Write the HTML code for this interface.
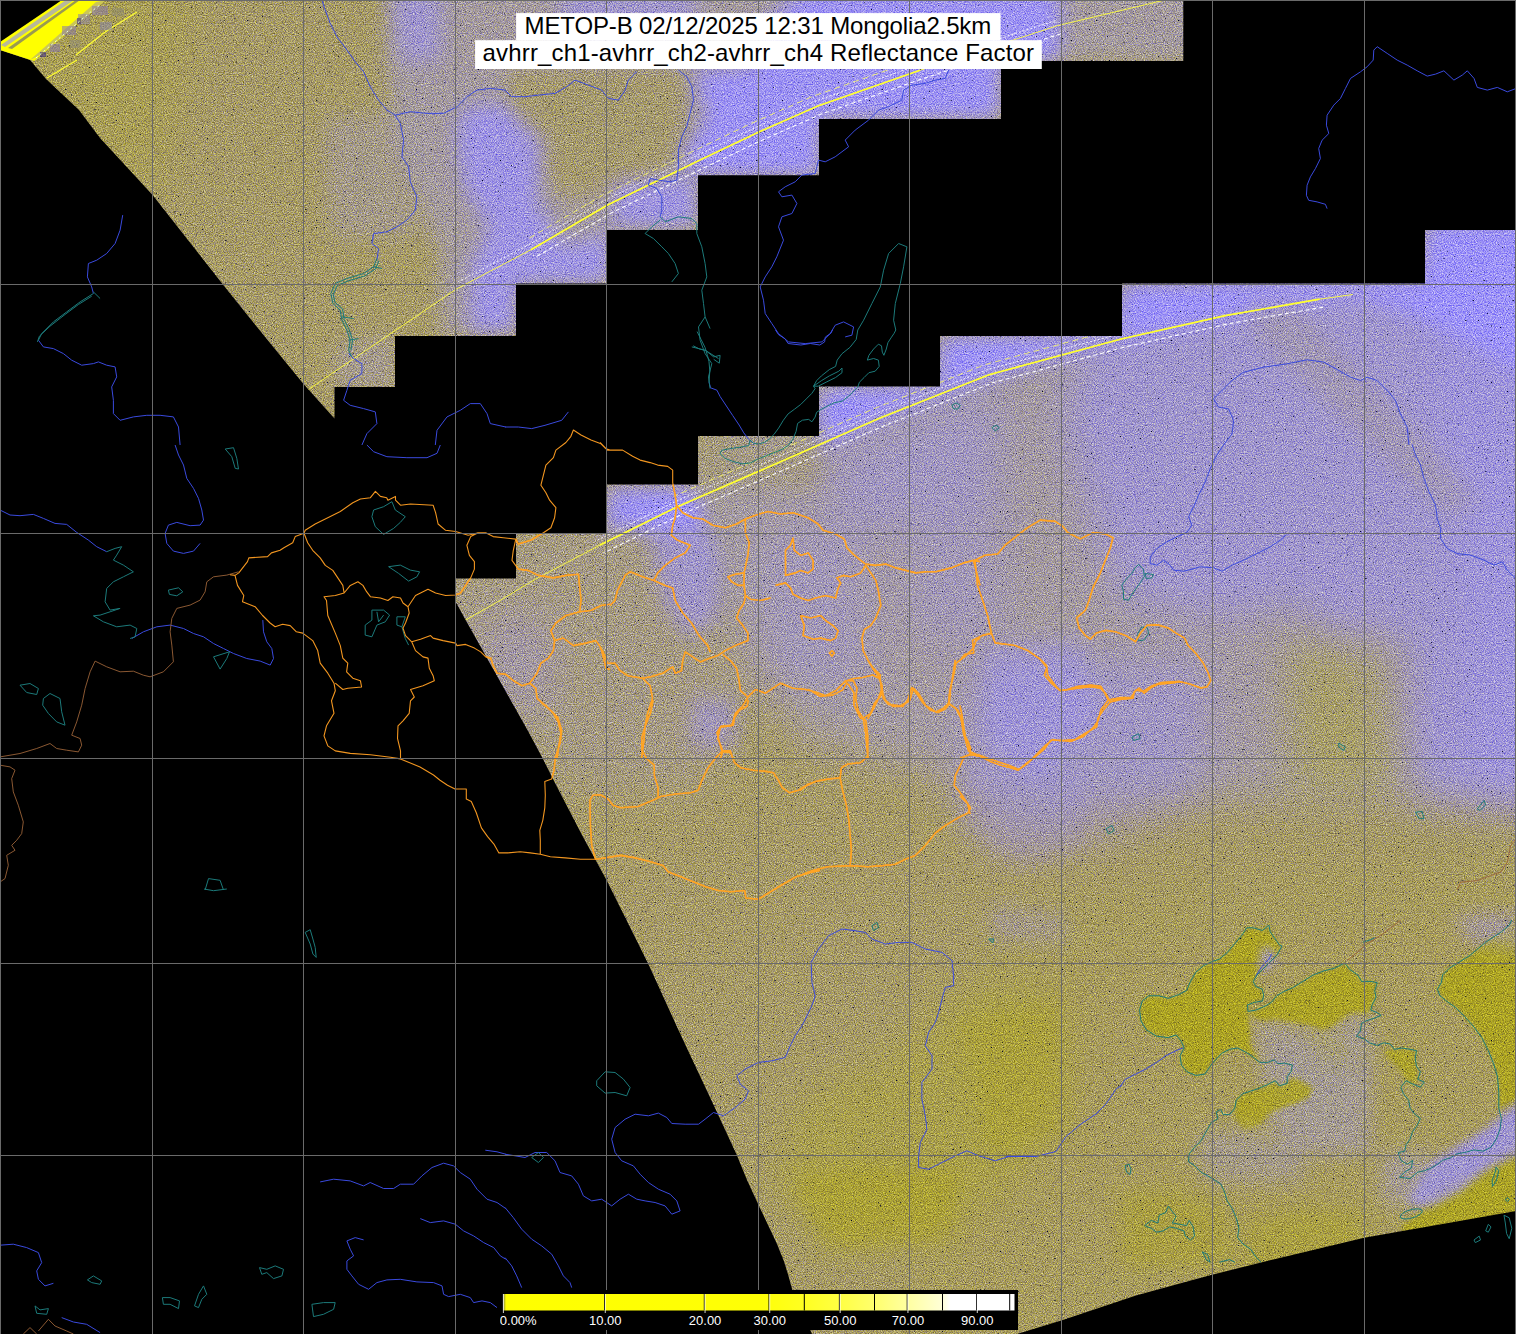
<!DOCTYPE html>
<html><head><meta charset="utf-8"><title>METOP-B AVHRR Mongolia</title>
<style>
html,body{margin:0;padding:0;background:#000;}
body{width:1516px;height:1334px;overflow:hidden;position:relative;font-family:"Liberation Sans",sans-serif;}
svg{position:absolute;left:0;top:0;display:block}
.cb{position:absolute;left:500px;top:1290px;width:518px;height:40px;background:#000}
</style></head><body>
<svg width="1516" height="1334" viewBox="0 0 1516 1334">
<defs>
<clipPath id="sw"><polygon points="62,0 1183.3,0 1183.3,61 1001,61 1001,119 819,119 819,175.2 698,175.2 698,230 607,230 607,283.5 516,283.5 516,336 395,336 395,387 334.5,387 334.5,418.5 303.5,384 268.6,341.3 222.5,284 152.8,195.2 100,138 79,110 46,79 30,60 0,50"/><polygon points="1516,230 1425,230 1425,283.5 1122,283.5 1122,336 940,336 940,386.5 819,386.5 819,436 698,436 698,484.5 606,484.5 606,533 516,533 516,578.5 455.8,578.5 455.8,602 464.5,618 487.5,659 501,683 528,731 543,759 555,783 582,835 606.5,880 648,963.2 679,1031.2 717,1112.2 737,1155.4 747,1180 758.5,1205 767.7,1224.3 776.9,1243.7 783.9,1261.3 788,1274.2 792.2,1289.4 812,1334 1017,1334 1061.3,1320.4 1136,1295.5 1211,1275 1272.3,1259.8 1364.2,1237.7 1442.5,1224 1516,1211"/></clipPath>
<filter id="b30" x="-30%" y="-30%" width="160%" height="160%"><feGaussianBlur stdDeviation="22"/></filter>
<filter id="b12" x="-30%" y="-30%" width="160%" height="160%"><feGaussianBlur stdDeviation="10"/></filter>
<filter id="b3" x="-10%" y="-10%" width="120%" height="120%"><feGaussianBlur stdDeviation="2"/></filter>
<filter id="b5" x="-30%" y="-30%" width="160%" height="160%"><feGaussianBlur stdDeviation="4"/></filter>
<filter id="nz" x="0" y="0" width="100%" height="100%" color-interpolation-filters="sRGB">
<feTurbulence type="fractalNoise" baseFrequency="0.9" numOctaves="2" seed="7" result="n"/>
<feColorMatrix type="matrix" values="1.2 0 0 0 -0.1  1.15 0 0 0 -0.075  0.5 0 1.1 0 -0.3  0 0 0 0 1"/>
</filter>
<filter id="dots" x="0" y="0" width="100%" height="100%" color-interpolation-filters="sRGB">
<feTurbulence type="fractalNoise" baseFrequency="0.55" numOctaves="1" seed="3"/>
<feColorMatrix type="matrix" values="0 0 0 0 0  0 0 0 0 0.02  0 0 0 0 0.15  9 0 0 0 -6.35"/>
</filter>
</defs>
<rect width="1516" height="1334" fill="#000"/>
<g clip-path="url(#sw)">
<rect width="1516" height="1334" fill="#a69a68"/>

<polygon points="-40,-40 200,-40 160,200 -40,60" fill="#aaa144" opacity="0.5" filter="url(#b30)"/>
<polygon points="389,-20 1200,-20 1200,61 1001,61 1001,119 819,119 819,176 698,176 698,230 607,230 607,284 517,284 517,336 440,336 440,250 400,160 385,60" fill="#a39bc4" opacity="0.6" filter="url(#b12)"/>
<polygon points="323,119 399,110 420,237 330,237" fill="#a39bc4" opacity="0.35" filter="url(#b12)"/>
<polygon points="335,345 395,335 395,390 335,390" fill="#a39bc4" opacity="0.4" filter="url(#b12)"/>
<polygon points="508,71 612,66 688,71 684,157 641,190 565,199 527,157 508,119" fill="#a69a68" opacity="0.85" filter="url(#b12)"/>
<polygon points="460,109 503,102 546,142 536,199 565,247 612,228 612,285 517,285 517,332 470,332 470,266 489,228 465,190 456,142" fill="#9d93fa" opacity="0.75" filter="url(#b12)"/>
<polygon points="693,71 755,66 760,28 802,-10 1060,-10 1060,61 1000,61 1000,119 821,119 821,176 698,176 679,157 707,119" fill="#9d93fa" opacity="0.92" filter="url(#b12)"/>
<polygon points="612,180 698,176 698,228 612,228" fill="#9d93fa" opacity="0.7" filter="url(#b12)"/>
<polygon points="389,-10 441,-10 441,62 400,62" fill="#9d93fa" opacity="0.5" filter="url(#b12)"/>
<polygon points="560,-10 700,-10 690,30 600,60 560,50" fill="#9d93fa" opacity="0.5" filter="url(#b12)"/>
<polygon points="700,436 819,387 940,336 1122,284 1425,230 1560,200 1560,800 1300,800 1100,800 950,780 800,740 740,640 700,560" fill="#a39bc4" opacity="0.62" filter="url(#b30)"/>
<polygon points="430,578 516,533 606,485 700,470 760,700 700,790 560,790 430,640" fill="#a39bc4" opacity="0.3" filter="url(#b30)"/>
<polygon points="606,487 698,487 698,531 606,531" fill="#9d93fa" opacity="0.92" filter="url(#b12)"/>
<polygon points="640,500 700,500 720,560 717,616 690,640 662,600 650,540" fill="#9d93fa" opacity="0.55" filter="url(#b12)"/>
<polygon points="820,387 940,387 940,336 1122,336 1122,284 1425,284 1425,220 1540,220 1540,380 1400,310 1350,296 1225,318 1121,340 989,378 871,424 820,450" fill="#9d93fa" opacity="0.95" filter="url(#b12)"/>
<polygon points="830,450 1000,385 1000,528 830,528" fill="#9d93fa" opacity="0.35" filter="url(#b30)"/>
<polygon points="1100,300 1560,230 1560,820 1420,800 1300,600 1230,620 1120,600 1060,420" fill="#9d93fa" opacity="0.5" filter="url(#b30)"/>
<polygon points="1420,330 1560,330 1560,800 1470,780 1460,520" fill="#9d93fa" opacity="0.3" filter="url(#b30)"/>
<polygon points="1240,300 1290,300 1480,500 1450,520 1260,340" fill="#a69a68" opacity="0.22" filter="url(#b12)"/>
<polygon points="909,528 1000,528 1000,640 909,640" fill="#9d93fa" opacity="0.25" filter="url(#b30)"/>
<polygon points="758,528 868,528 868,687 758,687" fill="#9d93fa" opacity="0.25" filter="url(#b30)"/>
<polygon points="985,650 1080,640 1100,720 1040,775 985,740" fill="#9d93fa" opacity="0.35" filter="url(#b12)"/>
<polygon points="698,436 820,436 820,487 698,487" fill="#a69a68" opacity="0.45" filter="url(#b12)"/>
<polygon points="691,698 735,698 735,749 691,749" fill="#9d93fa" opacity="0.45" filter="url(#b12)"/>
<polygon points="477,616 551,616 551,712 500,712" fill="#9d93fa" opacity="0.3" filter="url(#b30)"/>
<polygon points="970,660 1210,660 1200,800 1100,840 1000,850 960,800" fill="#9d93fa" opacity="0.38" filter="url(#b30)"/>
<polygon points="958,770 1020,755 1087,780 1080,850 1020,868 960,830" fill="#9d93fa" opacity="0.2" filter="url(#b12)"/>
<polygon points="993,905 1066,915 1066,945 993,940" fill="#9d93fa" opacity="0.35" filter="url(#b12)"/>
<polygon points="1290,640 1400,640 1400,790 1290,790" fill="#aaa144" opacity="0.6" filter="url(#b30)"/>
<polygon points="1000,900 1560,850 1560,1211 1017,1360 880,1360" fill="#aaa144" opacity="0.25" filter="url(#b30)"/>
<polygon points="770,1180 800,1100 900,1050 940,1000 1000,980 1070,1000 1060,1120 1000,1200 920,1240 830,1250" fill="#aaa144" opacity="0.7" filter="url(#b30)"/>
<polygon points="790,1180 860,1165 960,1170 950,1240 830,1250" fill="#aca322" opacity="0.5" filter="url(#b12)"/>
<polygon points="960,1020 1060,1000 1070,1130 990,1160" fill="#aca322" opacity="0.35" filter="url(#b12)"/>
<polygon points="1255.8,1019.3 1282,1027.1 1308.1,1032.3 1334.2,1027.1 1355.1,1014 1370.8,1019.3 1370.8,1155.1 1282,1155.1 1266.3,1102.9" fill="#a39bc4" opacity="0.5" filter="url(#b12)"/>
<polygon points="1279.4,944.8 1270.2,931.8 1268.9,925.2 1262.4,930.4 1253.2,927.8 1246.7,927.8 1241.5,935.7 1234.9,943.5 1227.1,952.7 1219.3,959.2 1211.4,961.8 1203.6,965.7 1195.8,972.2 1190.5,981.4 1186.6,990.5 1178.8,994.5 1168.3,998.4 1159.2,995.8 1148.7,995.8 1142.2,1001 1139.6,1010.1 1140.9,1020.6 1146.1,1029.7 1156.6,1036.2 1168.3,1037.6 1176.2,1034.9 1181.4,1041.5 1184,1048 1180.1,1055.8 1181.4,1065 1186.6,1071.5 1195.8,1075.4 1204.9,1074.1 1210.1,1066.3 1215.4,1059.8 1221.9,1053.2 1229.7,1049.3 1237.6,1048 1245.4,1051.9 1253.2,1057.1 1259.8,1062.4 1250.6,1045.4 1249.3,1024.5 1248,1011.4 1247.5,1004.9 1254.5,1002.3 1262.4,1001 1263.7,995.8 1262.4,989.2 1255.8,986.6 1253.2,981.4 1257.1,974.9 1263.7,968.3 1270.2,961.8 1276.7,955.3 1282,946.1" fill="#aca322" opacity="0.95" filter="url(#b3)"/>
<polygon points="1248,1011.4 1255.8,1010.1 1265,1006.2 1271.5,1002.3 1276.7,995.8 1283.3,991.8 1292.4,987.9 1302.9,981.4 1313.3,974.9 1323.8,970.9 1334.2,968.3 1344.7,963.1 1349.9,969.6 1357.7,974.9 1361.6,981.4 1370.8,981.4 1377.3,982.7 1374.7,990.5 1376,997.1 1372.1,1004.9 1370.8,1010.1 1365.6,1014 1355.1,1011.4 1344.7,1016.7 1334.2,1024.5 1323.8,1029.7 1308.1,1024.5 1292.4,1021.9 1276.7,1019.3 1261.1,1020.6 1253.2,1016.7" fill="#aca322" opacity="0.9" filter="url(#b3)"/>
<polygon points="1236.2,1100.3 1242.8,1093.7 1250.6,1091.1 1258.5,1088.5 1267.6,1084.6 1275.4,1080.7 1279.4,1085.9 1287.2,1083.3 1292.4,1076.7 1302.9,1082 1313.3,1087.2 1308.1,1097.6 1297.6,1102.9 1282,1108.1 1268.9,1113.3 1261.1,1123.8 1250.6,1129 1242.8,1129 1234.9,1118.5 1234.9,1108.1" fill="#aca322" opacity="0.85" filter="url(#b3)"/>
<polygon points="1383.8,1050.6 1394.3,1049.3 1402.1,1048 1410,1049.3 1416.5,1050.6 1415.2,1058.5 1416.5,1066.3 1417.8,1079.4 1413.9,1084.6 1406.1,1080.7 1402.1,1071.5 1394.3,1063.7 1386.5,1055.8" fill="#aca322" opacity="0.8" filter="url(#b3)"/>
<polygon points="1498.8,1108.1 1498.8,1092.4 1497.5,1076.7 1493.6,1063.7 1488.3,1050.6 1481.8,1037.6 1474,1027.1 1464.8,1016.7 1455.7,1007.5 1446.5,1001 1440,995.8 1437.4,989.2 1441.3,982.7 1442.6,974.9 1449.2,968.3 1459.6,961.8 1470.1,955.3 1477.9,948.7 1485.7,942.2 1493.6,937 1501.4,931.8 1509.2,925.2 1511.8,920 1538,920 1538,1087.2 1516,1100.3" fill="#aca322" opacity="0.92" filter="url(#b3)"/>
<polygon points="1420.4,1212.6 1428.3,1196.9 1441.3,1186.5 1459.6,1178.6 1480.5,1168.2 1496.2,1155.1 1538,1134.2 1538,1259.6 1404.7,1264.8 1402.1,1225.6" fill="#aca322" opacity="0.9" filter="url(#b3)"/>
<polygon points="1302.9,1029.7 1334.2,1034.9 1355.1,1055.8 1344.7,1066.3 1318.5,1050.6" fill="#aca322" opacity="0.35" filter="url(#b12)"/>
<polygon points="1433.5,1160.3 1459.6,1144.7 1485.7,1129 1504,1113.3 1538,1092.4 1538,1144.7 1485.7,1170.8 1459.6,1191.7 1428.3,1207.4 1407.4,1202.1 1420.4,1176" fill="#9d93fa" opacity="0.72" filter="url(#b5)"/>
<polygon points="1381.2,1155.1 1433.5,1149.9 1420.4,1207.4 1381.2,1202.1" fill="#a39bc4" opacity="0.5" filter="url(#b12)"/>
<polygon points="1459.6,914.8 1538,914.8 1538,951.3 1496.2,946.1 1459.6,935.7" fill="#9d93fa" opacity="0.4" filter="url(#b12)"/>
<polygon points="1120,1194.3 1172.2,1189.1 1224.5,1207.4 1234.9,1267.4 1120,1267.4" fill="#aca322" opacity="0.45" filter="url(#b12)"/>
<polygon points="1245.4,1220.4 1302.9,1207.4 1364.3,1212.6 1364.3,1285.7 1245.4,1285.7" fill="#aca322" opacity="0.45" filter="url(#b12)"/>
<polygon points="1193.1,1134.2 1250.6,1129 1302.9,1155.1 1302.9,1181.2 1206.2,1181.2" fill="#a39bc4" opacity="0.4" filter="url(#b12)"/>
<polygon points="1262.4,946.1 1272.8,948.7 1276.7,959.2 1266.3,972.2 1258.5,969.6" fill="#9d93fa" opacity="0.6" filter="url(#b5)"/>
<rect width="1516" height="1334" filter="url(#nz)" style="mix-blend-mode:overlay" opacity="0.85"/>
<rect width="1516" height="1334" filter="url(#dots)"/>
<polyline points="1319.6,299.2 1225.1,315.7 1121.2,339 989,374.8 880,418 780,462 678,506.4 600,545" fill="none" stroke="#ffff20" stroke-width="1.7"/>
<polyline points="1352.7,294.5 1319.6,299.2 1225.1,315.7 1121.2,339 989,374.8 880,418 780,462 678,506.4 600,545 535.8,579 501,599.9 462,622" fill="none" stroke="#ffff40" stroke-width="0.9"/>
<polyline points="1323.2,307.2 1228.7,323.7 1124.8,347 992.6,382.8 883.6,426 783.6,470 681.6,514.4 603.6,553" fill="none" stroke="#ffffff" stroke-width="1.1" stroke-dasharray="4 3"/>
<polyline points="1116.7,329 984.5,364.8 875.5,408 775.5,452 673.5,496.4" fill="none" stroke="#ffff60" stroke-width="0.8" stroke-dasharray="6 4"/>
<polyline points="1118.95,334 986.75,369.8 877.75,413 777.75,457 675.75,501.4 597.75,540" fill="none" stroke="#ffffff" stroke-width="0.9" stroke-dasharray="2 2"/>
<polyline points="920,70.3 817.2,106.3 758.9,132 700,160 607.6,204.9 531,249.7" fill="none" stroke="#ffff20" stroke-width="1.7"/>
<polyline points="1165,0 1057.4,25.7 920,70.3 817.2,106.3 758.9,132 700,160 607.6,204.9 531,249.7 455.9,289.3 386,336.8 320,381.6 305,392" fill="none" stroke="#ffff40" stroke-width="0.9"/>
<polyline points="1061,33.7 923.6,78.3 820.8,114.3 762.5,140 703.6,168 611.2,212.9 534.6,257.7" fill="none" stroke="#ffffff" stroke-width="1.1" stroke-dasharray="4 3"/>
<polyline points="915.5,60.3 812.7,96.3 754.4,122 695.5,150 603.1,194.9 526.5,239.7" fill="none" stroke="#ffff60" stroke-width="0.8" stroke-dasharray="6 4"/>
<polyline points="1055.15,20.7 917.75,65.3 814.95,101.3 756.65,127 697.75,155 605.35,199.9 528.75,244.7 453.65,284.3" fill="none" stroke="#ffffff" stroke-width="0.9" stroke-dasharray="2 2"/>
</g>
<g>
<polygon points="62,0 106,0 34,61 0,50 0,42" fill="#ffff00"/>
<polygon points="66,0 74,0 5,47 1,45" fill="#b8b89a"/>
<polygon points="76,0 80,0 12,49 8,48" fill="#9a9a50"/>
<polygon points="96,2 106,0 40,55 30,60" fill="#a8a090" opacity="0.6"/>
<path d="M47,78 L77,60 M76,55 L105,32 L137,12" stroke="#ffff30" stroke-width="1.2" fill="none"/>
<g opacity="0.55"><rect x="62" y="26" width="14" height="9" fill="#8a7aa8"/><rect x="78" y="14" width="12" height="10" fill="#8f86a0"/><rect x="92" y="6" width="16" height="9" fill="#8a7aa8"/><rect x="70" y="40" width="10" height="8" fill="#908c78"/><rect x="100" y="22" width="12" height="8" fill="#8a86a8"/><rect x="112" y="8" width="12" height="8" fill="#8f8a70"/><rect x="50" y="44" width="10" height="8" fill="#8a7aa8"/><rect x="40" y="52" width="6" height="5" fill="#30208a"/><rect x="77" y="18" width="4" height="6" fill="#30208a"/></g>
<path d="M36,58 L50,46 L62,36 L74,26 L88,14 L100,5" stroke="#e8fff0" stroke-width="1" stroke-dasharray="2 3" fill="none"/>
</g>
<path d="M321.9 0 L325.2 10 L330.2 23.3 L336.9 36.7 L346.9 50 L355.2 61.7 L363.6 71.7 L370.2 86.7 L378.6 100.1 L386.9 110.1 L395.3 115.1 L400.3 123.4 L403.6 140.1 L401.9 156.8 L408.6 166.8 L410.3 181.8 L416.9 196.8 L415.3 210.1 L406.9 220.1 L396.9 226.8 L386.9 231.8 L373.6 233.5 L371.9 243.5 L378.6 248.5 L376.9 260.2M348.6 353.6 L353.6 358.6 L361.9 363.6 L361.9 373.6 L350.2 380.3 L346.9 390.3 L343.6 400.3 L350.2 405.3 L363.6 408.6 L375.3 411.9 L376.9 423.6 L366.9 433.6 L361.9 445M395.3 115.1 L410.3 111.7 L427 113.4 L443.6 113.4 L457 106.7 L467 96.7 L477 90.1 L490.3 88.4 L505.7 90.1M122.7 215.1 L120.1 230.2 L115.1 243.5 L106.7 253.5 L96.7 260.2 L88.4 263.5 L87.4 276.9 L91.7 286.9 L93.4 293.5M38.4 340.2 L43.4 346.9 L53.4 348.6 L63.4 353.6 L71.7 360.2 L81.7 365.2 L93.4 363.6 L98.4 361.9 L106.7 365.2 L115.1 366.9 L116.7 376.9 L111.7 386.9 L113.4 400.3 L113.4 413.6 L120.1 420.3 L133.4 416.9 L146.8 415.3 L160.1 415.3 L173.4 416.9 L178.5 427 L180.1 445M435.3 445 L437 430.3 L447 416.9 L460.3 410.3 L470.3 403.6 L480.3 403.6 L487 413.6 L490.3 423.6 L505.7 427M505 90.1 L511.7 96.7 L525 96.7 L538.4 95.1 L555 93.4 L566.7 86.7 L575 80.1 L588.4 85.1 L601.7 90.1 L608.4 98.4 L618.4 100.1 L625.1 90.1 L628.4 80.1 L636.8 71.7M678.4 70 L686.8 76.7 L691.8 86.7 L693.5 100.1 L690.1 113.4 L686.8 126.8 L681.8 136.8 L678.4 150.1 L678.4 166.8 L676.8 180.1 L670.1 181.8 L658.4 180.1 L650.1 178.5 L648.4 185.1 L656.8 188.5 L661.8 196.8 L661.8 210.1 L660.1 216.8M948.6 70 L945.3 78.4 L935.3 80.1 L925.3 83.4 L911.9 85.1 L903.6 90.1 L901.9 100.1 L888.6 106.7 L878.6 110.1 L868.6 120.1 L855.2 130.1 L845.2 140.1 L848.6 146.8 L835.2 156.8 L825.2 161.8 L818.5 160.1 L815.2 173.4 L801.9 175.1 L795.2 181.8 L785.2 186.8 L778.5 191.8 L781.9 196.8 L791.9 195.1 L796.9 203.5 L791.9 213.5 L781.9 216.8 L778.5 226.8 L783.5 240.2 L776.8 256.8 L771.8 266.8 L765.2 276.9 L760.2 286.9 L763.5 300.2 L765.2 313.5 L771.8 323.5 L778.5 333.6 L788.5 341.9 L805.2 343.6 L821.9 341.9 L830.2 333.6 L835.2 325.2 L843.6 321.9 L853.6 326.9 L851.9 335.2 L845.2 336.9M568.4 411.9 L561.7 420.3 L545 425.3 L531.7 428.6 L518.3 427 L505 427M1516 88.5 L1507.3 91.8 L1497.3 87.4 L1487.3 90.1 L1477.3 87.4 L1474 78.4 L1467.3 70.8 L1462.3 75.1 L1453.9 80.1 L1443.9 70.8 L1435.6 74.1 L1427.2 76.1 L1417.2 70.8 L1407.2 65.1 L1397.2 60.1 L1387.2 53.4 L1377.2 46.7 L1373.8 50.1 L1373.2 60.1 L1367.1 66.8 L1360.5 71.8 L1350.5 78.4 L1345.4 88.5 L1340.4 98.5 L1333.8 105.1 L1327.1 115.2 L1326.4 125.2 L1328.8 133.5 L1322.1 140.2 L1318.7 148.5 L1320.4 158.5 L1315.4 168.6 L1310.4 176.9 L1307.1 185.2 L1306.4 195.3 L1308.7 200.3 L1317.1 201.9 L1325.4 204.3 L1327.1 208.6M1223.6 444.9 L1232 433.9 L1233.6 420.6 L1228.6 408.9 L1218.6 407.2 L1213.6 398.9 L1221.9 390.5 L1232 380.5 L1243.6 372.2 L1263.7 367.2 L1287 363.8 L1307.1 359.8 L1323.8 362.1 L1338.8 370.5 L1350.5 377.2 L1360.5 380.5 L1367.1 377.2 L1377.2 380.5 L1387.2 390.5 L1395.5 400.5 L1400.5 413.9 L1407.2 427.2 L1408.9 444.9M175.1 445 L178.5 455 L183.5 465 L186.8 478.4 L193.5 488.4 L198.5 498.4 L201.8 510 L203.5 520.1 L200.1 525.1 L190.1 525.7 L176.8 522.4 L168.4 525.1 L165.1 533.4 L166.8 543.4 L173.4 551.1 L183.5 553.4 L193.5 551.1 L200.1 543.4M0 510 L10 515 L20 515.7 L33.4 514.4 L43.4 518.4 L55 523.4 L66.7 524.4 L76.7 532.4 L88.4 540.1 L96.7 546.7 L106.7 551.7M131.8 638.5 L143.4 631.8 L156.8 626.8 L170.1 625.1 L183.5 628.5 L193.5 633.5 L203.5 636.8 L213.5 643.5 L223.5 648.5 L233.5 653.5 L246.8 658.5 L260.2 661.1 L270.2 665.1 L273.5 658.5 L271.8 648.5 L266.8 641.8 L263.5 631.8 L262.8 620.1M366.9 445 L373.6 451.7 L386.9 456.7 L406.9 457.7 L427 457.7 L437 453.3 L440.3 445M320.2 1181.9 L333.6 1179.2 L350.2 1180.9 L363.6 1185.9 L370.2 1182.5 L383.6 1188.5 L393.6 1188.5 L400.3 1184.2 L413.6 1184.2 L421.9 1175.9 L432 1167.5 L443.6 1163.2 L453.6 1165.9 L460.3 1172.5 L470.3 1179.2 L477 1189.2 L487 1199.2 L497 1202.5 L505.7 1208.5M420.3 1218.6 L430.3 1222.6 L443.6 1220.9 L455.3 1224.2 L463.6 1230.9 L473.6 1235.9 L483.7 1242.6 L493.7 1247.6 L500.3 1255.9 L505.7 1259.2M363.6 1239.9 L355.2 1237.6 L346.9 1240.9 L350.2 1249.2 L353.6 1255.9 L346.9 1260.9 L346.9 1269.3 L351.9 1275.9 L358.6 1284.3 L368.6 1289.3 L376.9 1282.6 L386.9 1279.9 L400.3 1279.3 L416.9 1281.9 L433.6 1282.6 L442 1285.9 L443.6 1294.3 L448.6 1296.6 L460.3 1294.3 L470.3 1297.6 L473.6 1302.6 L482 1300.9 L490.3 1302.6 L497 1307.6M485.3 1150.2 L497 1151.8 L505.7 1154.2M0 1245.2 L13.3 1244.2 L26.7 1247.6 L38.4 1252.6 L41.7 1262.6 L36.7 1270.9 L38.4 1279.3 L45 1285.9 L53.4 1283.3M61.7 1317.6 L73.4 1322 L86.7 1324.3 L100.1 1332.6M505 1154.2 L515 1155.8 L525 1157.5 L535 1152.5 L546.7 1152.5 L555 1160.8 L560 1172.5 L571.7 1175.9 L578.4 1184.2 L583.4 1195.9 L591.7 1200.9 L601.7 1199.2 L611.7 1205.9 L620.1 1199.2 L628.4 1194.2 L636.8 1199.2 L645.1 1200.9 L655.1 1202.5 L665.1 1205.9 L671.8 1214.2 L680.1 1210.9 L676.8 1200.9 L670.1 1194.2 L658.4 1189.2 L648.4 1182.5 L640.1 1174.2 L633.4 1165.9 L621.7 1160.8 L615.1 1152.5 L611.7 1139.2 L615.1 1127.5 L625.1 1119.2 L635.1 1114.2 L648.4 1115.8 L658.4 1113.1 L666.8 1117.5 L671.8 1123.5 L685.1 1124.2 L698.5 1124.2 L705.1 1119.2 L713.5 1112.5 L723.5 1115.8 L735.2 1107.5 L745.2 1099.1 L748.5 1090.8 L740.2 1084.1 L736.8 1075.8 L745.2 1069.1 L758.5 1062.4 L771.8 1060.8 L785.2 1057.4 L790.2 1045.8 L795.2 1035.8 L801.9 1025.8 L806.9 1015.8 L811.9 1005.7 L815.2 995.7 L811.9 982.4 L811.2 962.4 L818.5 949 L828.5 935.7 L841.9 929 L855.2 930.7 L865.2 932.4 L871.9 939 L885.3 944 L898.6 942.4 L911.9 942.4 L925.3 949 L942 952.4 L952 960.7 L953.6 975.7 L953.6 985.7 L945.3 987.4 L942 999.1 L938.6 1012.4 L935.3 1022.4 L928.6 1032.4 L925.3 1045.8 L932 1055.8 L932 1069.1 L921.9 1082.5 L921.9 1099.1 L925.3 1115.8 L926.9 1129.2 L920.3 1142.5 L918.6 1155.8 L918.6 1167.5 L928.6 1169.2 L942 1162.5 L955.3 1155.8 L967 1150.8 L978.6 1155.8 L995.3 1160.8 L1010.7 1155.8M505 1207.5 L513.3 1217.6 L521.7 1229.2 L531.7 1239.2 L541.7 1245.9 L551.7 1254.2 L558.4 1265.9 L563.4 1275.9 L570 1282.6 L571.7 1287.6M505 1257.6 L511.7 1265.9 L516.7 1275.9 L521.7 1287.6M1223.6 445 L1216.9 455 L1210.3 468.4 L1205.3 481.7 L1198.6 495.1 L1193.6 506.7 L1188.6 516.8 L1191.9 525.1 L1186.9 532.4 L1176.9 536.8 L1166.9 541.8 L1156.9 548.5 L1150.2 556.8 L1150.2 563.5 L1156.9 565.2 L1163.5 560.2 L1170.2 565.2 L1173.6 570.2 L1183.6 571.2 L1191.9 569.2 L1200.3 566.8 L1213.6 567.8 L1221.9 571.2 L1232 565.2 L1243.6 560.2 L1257 553.5 L1270.3 546.8 L1280.4 540.1 L1286.4 534.5M1412.2 445 L1415.5 455 L1420.5 465 L1423.9 478.4 L1428.9 491.7 L1435.6 505.1 L1437.2 518.4 L1440.6 528.4 L1440.6 538.5 L1447.2 548.5 L1457.3 553.5 L1470.6 555.1 L1484 560.2 L1494 565.2 L1502.3 561.8 L1507.3 570.2 L1516 578.5M1120 1087.2 L1125.2 1079.4 L1135.7 1074.1 L1146.1 1068.9 L1156.6 1062.4 L1165.7 1055.8 L1176.2 1050.6 L1182.7 1048M1255.8 976.2 L1259.8 969.6 L1263.7 964.4 L1268.9 959.2 L1271.5 954M709 382.2 L710.6 387.8 L716.9 390.2 L720.1 396.5 L726.4 406 L732.7 415.5 L739.1 425 L743.8 432.9 L748.6 439.2 L753.3 443.2M775.5 330 L778.6 334.7 L785 338.7 L788.1 343.5 L800.8 345 L810.3 343.5 L819.8 345 L824.6 341.9 L825.3 337.1 L830.9 333.2 L832.5 330M1006 1156.5 L1036 1156.5 L1056 1151.5 L1066 1136.5 L1081 1124 L1096 1114 L1106 1104 L1116 1089 L1122 1085" fill="none" stroke="#3a4ade" stroke-width="1.0" stroke-linejoin="round"/>
<path d="M376.9 258.5 L373.6 266.8 L363.6 273.5 L346.9 278.5 L335.2 283.5 L330.9 293.5 L332.9 303.5 L340.2 310.2 L341.9 320.2 L346.9 330.2 L350.2 340.2 L348.6 350.2 L351.9 356.9M378.9 260.8 L375.6 268.8 L364.9 275.9 L348.2 280.9 L337.2 285.5 L333.2 294.2 L334.9 302.2 L342.6 308.9 L344.2 319.5 L349.2 329.6 L352.6 340.2 L350.9 350.2M373.6 266.8 L381.9 268.5M341.9 316.9 L353.6 318.5M348.6 340.2 L358.6 338.6M93.4 291.9 L100.1 298.5M93.4 293.5 L80.1 301.9 L66.7 311.9 L53.4 321.9 L41.7 333.6 L38.4 340.2M91.7 296.2 L78.4 304.5 L65 314.5 L50 326.2 L39.4 336.2 L37.4 341.9M660.1 216.8 L665.1 221.8 L678.4 216.8 L691.8 218.5 L696.8 223.5 L696.8 233.5 L701.8 246.8 L705.1 263.5 L706.8 276.9 L701.8 290.2 L703.5 303.5 L705.1 316.9 L698.5 326.9 L700.1 340.2 L705.1 353.6 L711.8 363.6 L708.5 376.9 L710.1 388.6M660.1 220.1 L651.8 226.8 L645.1 233.5 L653.4 238.5 L661.8 246.8 L668.4 253.5 L675.1 263.5 L678.4 273.5 L671.8 281.9M691.8 346.9 L705.1 350.2 L718.5 358.6M705.1 316.9 L710.1 328.6M952 405.3 L956 402.9 L960.3 405.3 L958 408.9 L953.6 408.9 L952 405.3M992 427.6 L996 425.3 L999.3 427.6 L995.3 431 L992 427.6M106.7 551.7 L115.1 548.4 L121.7 546.7 L116.7 555.1 L113.4 560.1 L123.4 565.1 L133.4 571.8 L123.4 576.8 L113.4 581.8 L106.7 588.4 L105.1 601.8 L110.1 610.1 L120.1 608.4 L110.1 611.8 L100.1 615.1 L93.4 615.8 L103.4 621.8 L116.7 626.8 L130.1 625.1 L136.8 628.5 L135.1 636.8 L130.1 638.5M225.2 449 L233.5 447.7 L236.8 458.3 L238.5 469 L235.2 468.3 L231.8 456.7 L225.2 449M373.6 510 L383.6 506.7 L391.9 501.7 L395.3 510 L405.3 516.7 L400.3 522.4 L393.6 528.4 L383.6 534.4 L375.3 526.7 L371.9 516.7 L373.6 510M388.6 566.7 L400.3 565.1 L410.3 570.1 L419.6 571.8 L416.9 576.8 L408.6 581.1 L398.6 573.4 L388.6 566.7M371.9 610.1 L383.6 610.1 L389.6 615.1 L385.3 621.8 L376.9 625.1 L371.9 636.8 L365.2 635.1 L365.2 625.1 L371.9 620.1 L371.9 610.1M376.9 611.8 L378.6 621.8 L383.6 615.1M396.9 616.8 L405.3 616.8 L401.9 626.8 L396.9 625.1 L396.9 616.8M401.9 626.8 L405.3 638.5 L408.6 645.1M168.4 590.1 L178.5 587.8 L182.8 591.8 L176.8 595.8 L169.4 594.4 L168.4 590.1M213.5 656.8 L229.5 651.8 L226.8 658.5 L220.1 669.1 L213.5 656.8M20 685.2 L30 683.5 L38.4 688.5 L36.7 694.5 L26.7 692.5 L20 685.2M43.4 698.5 L50 693.5 L60 698.5 L61.7 711.8 L65 725.2 L56.7 721.9 L48.4 713.5 L42.7 705.2 L43.4 698.5M205.1 890 L208.5 878.6 L220.1 880.3 L223.5 890M305.2 932.4 L310.2 929.7 L312.9 939 L315.2 947.4 L316.2 957.4 L312.9 954 L310.2 944 L305.2 932.4M259.5 1267.6 L266.8 1269.3 L275.2 1265.9 L283.5 1269.3 L281.9 1275.9 L273.5 1278.6 L266.8 1272.6 L261.8 1274.3 L259.5 1267.6M87.4 1279.9 L93.4 1275.9 L101.7 1280.9 L100.1 1284.3 L91.7 1282.6 L87.4 1279.9M162.4 1297.6 L170.1 1297.6 L179.5 1300.9 L178.5 1308.6 L170.1 1304.3 L163.4 1304.3 L162.4 1297.6M194.5 1305.9 L198.5 1294.3 L203.5 1285.9 L206.8 1294.3 L201.8 1299.3 L198.5 1307.6 L194.5 1305.9M311.9 1304.3 L323.5 1302.6 L335.2 1302.6 L333.6 1309.3 L323.5 1314.3 L313.5 1316.6 L311.9 1304.3M35 1305.9 L40 1309.9 L48.4 1308.6 L46.7 1314.3 L36.7 1313.3 L35 1305.9M204.1 889 L213.5 890.7 L226.8 889M596.7 1080.8 L605.1 1071.8 L615.1 1072.5 L623.4 1079.1 L630.1 1087.5 L626.7 1095.8 L615.1 1092.5 L605.1 1093.1 L596.7 1085.8 L596.7 1080.8M531.7 1157.5 L538.4 1152.5 L543.4 1157.5 L538.4 1162.5 L531.7 1157.5M871.9 925.7 L876.9 922.4 L878.6 927.4 L873.6 930.7 L871.9 925.7M988.7 939 L993.7 939 L992.7 943 L988.7 939M1138.5 564.5 L1143.5 569.2 L1144.2 576.8 L1138.5 585.2 L1133.5 591.9 L1128.5 600.2 L1123.5 599.2 L1123.5 591.9 L1121.8 585.2 L1126.8 578.5 L1131.8 573.5 L1135.2 567.8 L1138.5 564.5M1145.2 573.5 L1153.5 574.5 L1151.9 577.8 L1146.2 578.5 L1145.2 573.5M1141.8 626.9 L1147.5 627.9 L1148.5 633.6 L1143.5 640.3 L1137.8 640.3 L1137.8 633.6 L1141.8 626.9M1131.8 737.1 L1138.5 733.7 L1140.2 738.7 L1133.5 740.4 L1131.8 737.1M1338.8 743.1 L1345.4 747.1 L1343.8 750.4 L1338.8 747.1 L1338.8 743.1M1106.1 828.8 L1111.8 825.5 L1114.1 830.5 L1108.5 833.9 L1106.1 828.8M1415.5 812.2 L1422.2 811.5 L1423.9 818.8 L1418.9 818.2 L1415.5 812.2M1477.3 808.8 L1484 800.5 L1485.6 804.8 L1480 810.5 L1477.3 808.8M1279.4 944.8 L1270.2 931.8 L1268.9 925.2 L1262.4 930.4 L1253.2 927.8 L1246.7 927.8 L1241.5 935.7 L1234.9 943.5 L1227.1 952.7 L1219.3 959.2 L1211.4 961.8 L1203.6 965.7 L1195.8 972.2 L1190.5 981.4 L1186.6 990.5 L1178.8 994.5 L1168.3 998.4 L1159.2 995.8 L1148.7 995.8 L1142.2 1001 L1139.6 1010.1 L1140.9 1020.6 L1146.1 1029.7 L1156.6 1036.2 L1168.3 1037.6 L1176.2 1034.9 L1181.4 1041.5 L1184 1048 L1180.1 1055.8 L1181.4 1065 L1186.6 1071.5 L1195.8 1075.4 L1204.9 1074.1 L1210.1 1066.3 L1215.4 1059.8 L1221.9 1053.2 L1229.7 1049.3 L1237.6 1048 L1245.4 1051.9 L1253.2 1057.1 L1259.8 1062.4 L1267.6 1062.4 L1274.1 1059.8 L1278 1063.7 L1284.6 1063.2 L1292.4 1065 L1291.1 1071.5 L1287.2 1076.7 L1287.2 1083.3 L1279.4 1085.9 L1275.4 1080.7 L1267.6 1084.6 L1258.5 1088.5 L1250.6 1091.1 L1242.8 1093.7 L1236.2 1100.3 L1234.9 1108.1 L1229.7 1114.6 L1223.2 1114.6 L1220.6 1109.4 L1216.1 1112 L1218 1118.5 L1211.4 1122.5 L1206.2 1131.6 L1201 1140.7 L1194.5 1147.3 L1189.2 1153.8 L1188.4 1161.6 L1194.5 1165.6 L1201 1172.1 L1210.1 1177.3 L1220.6 1183.8 L1224.5 1191.7 L1227.1 1200.8 L1232.3 1208.7 L1236.2 1217.8 L1238.9 1228.3 L1237.6 1237.4 L1242.8 1243.9 L1250.6 1249.2 L1255.8 1257 L1261.1 1262.2M1279.4 944.8 L1282 946.1 L1276.7 955.3 L1270.2 961.8 L1263.7 968.3 L1257.1 974.9 L1253.2 981.4 L1255.8 986.6 L1262.4 989.2 L1263.7 995.8 L1262.4 1001 L1254.5 1002.3 L1247.5 1004.9 L1248 1011.4 L1255.8 1010.1 L1265 1006.2 L1271.5 1002.3 L1276.7 995.8 L1283.3 991.8 L1292.4 987.9 L1302.9 981.4 L1313.3 974.9 L1323.8 970.9 L1334.2 968.3 L1344.7 963.1 L1349.9 969.6 L1357.7 974.9 L1361.6 981.4 L1370.8 981.4 L1377.3 982.7 L1374.7 990.5 L1376 997.1 L1372.1 1004.9 L1370.8 1010.1 L1377.3 1012.7 L1381.2 1015.4 L1374.7 1018 L1366.9 1020.6 L1361.6 1023.2 L1360.3 1031 L1356.4 1036.2 L1364.3 1038.9 L1369.5 1042.8 L1377.3 1045.4 L1383.8 1042.8 L1390.4 1044.1 L1394.3 1049.3 L1402.1 1048 L1410 1049.3 L1416.5 1050.6 L1415.2 1058.5 L1416.5 1066.3 L1420.4 1071.5 L1417.8 1079.4 L1424.3 1082 L1420.4 1087.2 L1413.9 1084.6 L1406.1 1080.7 L1400.8 1087.2 L1403.4 1093.7 L1408.7 1100.3 L1410 1108.1 L1415.2 1114.6 L1420.4 1118.5 L1416.5 1126.4 L1412.6 1131.6 L1410 1139.4 L1406.1 1144.7 L1404.7 1151.2 L1398.2 1152.5 L1400.8 1160.3 L1407.4 1164.3 L1412.6 1160.3 L1411.3 1168.2 L1404.7 1172.1 L1399.5 1177.3 L1410 1178.6 L1417.8 1172.1 L1424.3 1170.8 L1430.9 1168.2 L1437.4 1164.3 L1442.6 1160.3 L1450.5 1157.7 L1457 1153.8 L1464.8 1152.5 L1474 1149.9 L1483.1 1151.2 L1491 1147.3 L1496.2 1139.4 L1500.1 1129 L1501.4 1118.5 L1498.8 1108.1 L1498.8 1092.4 L1497.5 1076.7 L1493.6 1063.7 L1488.3 1050.6 L1481.8 1037.6 L1474 1027.1 L1464.8 1016.7 L1455.7 1007.5 L1446.5 1001 L1440 995.8 L1437.4 989.2 L1441.3 982.7 L1442.6 974.9 L1449.2 968.3 L1459.6 961.8 L1470.1 955.3 L1477.9 948.7 L1485.7 942.2 L1493.6 937 L1501.4 931.8 L1509.2 925.2 L1511.8 920M1422.2 1211.8 L1420 1214.4 L1415.4 1216.9 L1409.7 1218.6 L1404.4 1219 L1401 1218 L1400.3 1216 L1402.6 1213.3 L1407.1 1210.9 L1412.8 1209.2 L1418.1 1208.8 L1421.6 1209.7 L1422.2 1211.8M1496.2 1166.9 L1498.8 1170.8 L1496.2 1181.2 L1492.3 1186.5 L1492.3 1179.9 L1494.9 1173.4 L1496.2 1166.9M1507.4 1197.4 L1509.5 1199.5 L1507.4 1201.6 L1505.3 1199.5 L1507.4 1197.4M1474 1240 L1479.2 1236.1 L1480.5 1240 L1475.3 1242.6 L1474 1240M1488.3 1224.3 L1491 1226.9 L1488.3 1232.2 L1485.7 1230.9 L1488.3 1224.3M1504 1215.2 L1509.2 1217.8 L1511.8 1228.3 L1509.2 1238.7 L1506.6 1233.5 L1505.3 1223 L1504 1215.2M1144.8 1225.6 L1151.3 1220.4 L1157.9 1223 L1159.2 1215.2 L1165.7 1212.6 L1168.3 1206.1 L1172.2 1211.3 L1176.2 1216.5 L1172.2 1223 L1180.1 1224.3 L1186.6 1225.6 L1189.2 1220.4 L1193.1 1226.9 L1194.5 1236.1 L1190.5 1240 L1185.3 1236.1 L1184 1230.9 L1176.2 1228.3 L1169.6 1226.9 L1163.1 1230.9 L1156.6 1232.2 L1151.3 1228.3 L1144.8 1225.6M1125.2 1165.6 L1129.1 1164.3 L1131 1169.5 L1129.9 1174.7 L1126.5 1172.1 L1125.2 1165.6M1202.3 1251.8 L1207.5 1254.4 L1210.1 1262.2 L1206.2 1259.6 L1202.3 1251.8M1219.3 1262.2 L1229.7 1259.6 L1234.9 1262.2M1362.9 942.2 L1370.8 939.6 L1374.7 937.8M898.6 243.5 L888.6 253.5 L883.6 270.2 L880.3 286.9 L871.9 303.5 L863.6 320.2 L857.8 330 L856.2 339.5 L849.9 347.4 L842 353.7 L837.2 360.1 L835.6 366.4 L829.3 369.6 L821.4 375.9 L816.6 380.7 L813.5 386.2 L815.1 388.6 L811.9 393.3 L807.1 398.1 L800.8 404.4 L794.5 409.2 L788.1 413.9 L783.4 420.2 L778.6 428.1 L773.9 434.5 L769.2 439.2 L764.4 442.4 L758.1 444 L753.3 443.2 L750.2 440 L748.6 445.6 L740.7 447.1 L729.6 448.7 L721.7 450.3 L720.1 453.5 L724.8 458.2 L732.7 461.4 L742.2 463.8 L750.2 463 L758.1 459 L766 455.9 L773.9 452.7 L781.8 449.5 L788.1 445.6 L792.9 439.2 L796.1 431.3 L797.6 423.4 L802.4 420.2 L808.7 419.4 L811.9 421.8 L815.1 417.1 L816.6 412.3 L821.4 409.2 L827.7 406 L834.1 402.8 L842 401.2 L848.3 396.5 L853.1 391.7 L857.8 387 L859.4 382.2 L864.1 377.5 L868.9 372.7 L875.2 371.2 L879.2 366.4 L878.4 360.1 L873.6 358.5 L867.3 360.1 L868.9 355.3 L873.6 349 L878.4 344.2 L881.5 345.8 L882.3 352.2 L883.9 355.3 L886.3 349 L887.9 342.7 L891 337.9 L894.2 333.2 L895.8 330 L893.6 320.2 L895.3 303.5 L900.3 283.5 L903.6 266.8 L906.9 246.8 L898.6 243.5M813.5 386.2 L821.4 380.7 L829.3 375.9 L838.8 371.2 L842 368 L842 372.7 L835.6 377.5 L826.1 382.2 L818.2 386.2 L813.5 386.2M697.1 331.6 L701.1 339.5 L705 347.4 L707.4 355.3 L709 361.7 L709.8 371.2 L709 382.2M693.2 345.8 L699.5 349 L705.8 350.6 L713.7 356.9 L720.1 355.3 L719.3 363.2 L713.7 359.3" fill="none" stroke="#1c7a7a" stroke-width="1.0" stroke-linejoin="round"/>
<path d="M238.5 571.8 L226.8 575.1 L213.5 576.8 L206.8 581.8 L205.1 591.8 L200.1 600.1 L190.1 605.1 L176.8 608.4 L171.8 618.4 L170.1 631.8 L171.8 645.1 L173.4 661.8 L163.4 671.8 L150.1 676.8 L143.4 675.2 L133.4 671.2 L120.1 671.8 L106.7 666.8 L95.1 661.1 L90.1 671.8 L85.1 688.5 L81.7 705.2 L76.7 721.9 L71.7 735.2 L80.1 738.5 L81.7 745.2 L78.4 751.9 L66.7 750.2 L56.7 748.5 L50 743.5 L36.7 748.5 L20 753.5 L0 756.9M0 765.2 L10 766.9 L15 770.2 L11.7 778.6 L13.3 791.9 L18.3 805.2 L23.3 821.9 L21.7 833.6 L16.7 840.3 L11.7 845.3 L15 850.3 L6.7 855.3 L8.3 865.3 L5 878.6 L0 882M23.3 1334 L30 1327.6 L36.7 1334M38.4 1331 L48.4 1319.3 L55 1326 L66.7 1331 L73.4 1334M1457.3 889.9 L1460.6 882.2 L1477.3 880.6 L1490.6 875.6 L1500.7 872.2 L1507.3 862.2 L1510.7 845.5 L1516 838.9M1400.8 920 L1394.3 925.2 L1383.8 933.1 L1376 938.3 L1365.6 944.8 L1355.1 954 L1347.3 960.5" fill="none" stroke="#9a6238" stroke-width="0.9" stroke-linejoin="round"/>
<path d="M230 574.7 L235 575.4 L238.8 572.9 L247.5 561.6 L248.8 557.9 L267.6 556.6 L271.4 552.9 L280.1 550.3 L283.9 547.8 L292.7 542.8 L295.2 536.6 L304 533.3 L305.2 530.3 L315.2 524 L330.3 516.5 L340.3 511.5 L352.8 502.7 L360.4 499 L370.4 497.7 L375.4 491.4 L380.4 496.4 L386.7 497.7 L387.9 500.2 L395.5 496.4 L395.5 500.2 L400.5 505.2 L410.5 504 L433.1 505.2 L435.6 512.7 L438.1 524 L445.6 530.3 L455.6 531.5 L468.2 535.3 L478.2 532.8 L485.7 532.8 L493.2 536.6 L503.3 537.8 L515.8 539.1 L518.3 544.1 L530.8 540.3 L543.4 532.8 L550.9 527.8 L554.6 517.8 L555.9 507.7 L549.6 500.2 L545.9 492.7 L540.9 485.2 L543.4 475.1 L545.9 465.1 L553.4 457.6 L555.9 450.1 L565.9 442.5 L570.9 436.3 L573.4 430 L581 435 L591 440 L601 443.8 L606 448.8 L610 450.1M235 575.4 L237.5 585.4 L243.8 595.5 L242.5 601.7 L255.1 606.7 L262.6 615.5 L270.1 623 L275.1 626.8 L282.6 624.3 L290.2 625.6 L296.4 631.8 L302.7 633.1 L312.7 640.6 L317.7 650.6 L320.2 663.2 L327.8 673.2 L334 683.2 L335.3 690.7 L331.5 700.8 L334 713.3 L326.5 725.8 L324 735.9 L327.8 745.9 L335.3 750.9 L350.3 753.4 L370.4 754.7 L390.4 757.2 L400.5 758.9M304 533.3 L307.7 542.8 L312.7 550.3 L320.2 557.9 L325.3 565.4 L332.8 570.4 L337.8 577.9 L342.8 585.4 L344.1 593 L335.3 595.5 L324 596.7 L326.5 600.5 L327.8 615.5 L335.3 633.1 L340.3 645.6 L342.8 658.1 L347.8 663.2 L346.6 671.9 L352.8 678.2 L360.4 680.7 L361.6 687 L347.8 688.2 L342.8 689.5 L335.3 683.2M344.1 593 L350.3 585.4 L357.9 581.7 L362.9 585.4 L366.6 591.7 L370.4 596.7 L380.4 598 L387.9 600.5 L392.9 596.7 L400.5 598 L403 603 L408 606.7 L415.5 595.5 L428 589.2 L435.6 593 L445.6 595.5 L455.6 595 L460.6 593 L465.6 585.4 L470.7 577.9 L474.4 569.1 L474.4 561.6 L469.4 555.4 L466.9 545.3 L470.7 536.6 L478.2 532.8M408 606.7 L409.2 613 L405.5 623 L403 628.1 L405.5 635.6 L411.7 641.8 L415.5 650.6 L423 656.9 L428 658.1 L429.3 668.2 L433.1 675.7 L434.3 680.7 L423 685.7 L410.5 689.5 L414.3 697 L410.5 700.8 L409.2 713.3 L403 720.8 L398 725.8 L397.5 738.4 L400.5 750.9 L400.5 758.9M411.7 641.8 L420.5 639.3 L430.6 635.6 L433.1 638.1 L443.1 640.6 L455.6 643.1 L456.9 645.6 L465.6 644.4 L474.4 648.1 L480.7 651.9 L485.7 656.9 L490.7 658.1 L493.2 665.7 L497 673.2 L505.8 674.4 L513.3 680.7 L522.1 685.7 L529.6 683.2 L535.8 688.2 L537.1 698.3 L545.9 705.8 L553.4 713.3 L558.4 722.1 L560.9 733.3 L558.4 748.4 L557.1 758.9M515.8 539.1 L513.3 550.3 L512 560.4 L518.3 569.1 L528.3 570.4 L538.3 575.4 L553.4 577.9 L565.9 575.4 L578.5 574.2 L579.7 587.9 L581 600.5 L579.7 611.8 L565.9 615.5 L555.9 623 L550.9 630.6 L554.6 640.6 L563.4 638.1 L573.4 645.6 L586 643.1 L596 640.6 L601 648.1 L603.5 658.1 L606 668.2 L610 669.4M579.7 611.8 L591 610.5 L601 605.5 L610 604.2M554.6 640.6 L553.4 650.6 L548.4 658.1 L540.9 663.2 L537.1 673.2 L529.6 683.2M600 442.5 L607.5 450.1 L622.6 450.1 L632.6 456.3 L640.1 460.1 L650.1 462.6 L657.7 465.1 L667.7 466.4 L672.7 470.1 L672.7 482.7 L675.2 495.2 L676.5 505.2 L682.7 512.7 L692.8 517.8 L702.8 519 L712.8 525.3 L725.3 527.8 L736.6 524 L745.4 519 L755.4 515.2 L768 511.5 L780.5 514 L793 512.7 L808.1 517.8 L818.1 524 L823.1 530.3 L835.6 534 L844.4 539.1 L846.9 547.8 L853.2 554.1 L860.7 560.4 L865.7 564.1 L875.8 565.4 L885.8 564.1 L895.8 567.9 L905.8 570.4 L915.9 572.9 L925.9 571.7 L935.9 571.7 L951 567.9 L963.5 562.9 L973.5 560.4 L980 561.6M676.5 505.2 L675.2 517.8 L672.7 525.3 L671.4 535.3 L677.7 540.3 L690.2 545.3 L685.2 552.9 L675.2 557.9 L665.2 565.4 L657.7 572.9 L653.9 580.4 L642.6 576.7 L630.1 571.7 L625.1 575.4 L621.3 582.9 L617.5 590.5 L615 600.5 L610 605.5M653.9 580.4 L665.2 585.4 L672.7 587.9 L675.2 600.5 L682.7 613 L691.5 623 L699 635.6 L707.8 645.6 L710.3 651.9M745.4 519 L745.4 532.8 L749.2 542.8 L747.9 555.4 L744.1 572.9 L744.1 585.4 L745.4 595.5 L744.1 603 L739.1 610.5 L736.6 618 L742.9 625.6 L747.9 633.1 L747.9 640.6 L735.4 645.6 L725.3 650.6 L717.8 655.6 L710.3 658.1 L700.3 661.9 L692.8 656.9 L685.2 651.9 L682.7 660.6 L681.5 670.7 L675.2 673.2 L672.7 666.9 L662.7 673.2 L650.1 676.9 L642.6 678.2 L627.6 675.7 L620.1 670.7 L615 663.2 L607.5 663.2 L602.5 650.6 L600 648.1M744.1 572.9 L735.4 574.2 L727.9 576.7 L731.6 581.7 L737.9 585.4 L744.1 585.4M745.4 595.5 L750.4 599.2 L760.4 600.5 L770.5 598M775.5 585.4 L785.5 582.9 L790.5 587.9 L793 594.2 L800.6 598 L808.1 600.5 L815.6 598 L825.6 595.5 L835.6 598 L838.2 587.9 L840.7 582.9 L836.9 577.9 L843.2 575.4 L850.7 576.7 L860.7 572.9 L865.7 565.4M793 537.8 L790.5 545.3 L785.5 550.3 L785.5 565.4 L785.5 575.4 L795.5 572.9 L800.6 570.4 L808.1 572.9 L813.1 569.1 L813.1 560.4 L808.1 552.9 L800.6 555.4 L794.3 550.3 L793 537.8M800.6 615.5 L810.6 618 L820.6 615.5 L825.6 620.5 L833.1 625.6 L838.2 630.6 L835.6 638.1 L830.6 640.6 L820.6 638.1 L813.1 639.3 L803.1 635.6 L804.3 625.6 L800.6 615.5M831.9 650.6 L834.4 653.1 L831.9 656.1 L829.4 653.1 L831.9 650.6M865.7 565.4 L870.7 572.9 L875.8 580.4 L878.3 590.5 L880.8 605.5 L875.8 618 L870.7 625.6 L864.5 629.3 L862 638.1 L863.2 650.6 L868.2 660.6 L873.3 669.4 L878.3 675.7 L882 685.7 L880.8 695.7 L874.5 703.3 L870.7 713.3 L863.2 718.3 L858.2 710.8 L855.7 698.3 L857 688.2 L853.2 680.7 L845.7 680.7 L835.6 690.7 L825.6 695.7 L815.6 692 L805.6 689.5 L793 688.2 L780.5 683.2 L773 688.2 L765.5 693.2 L755.4 689.5M722.8 654.4 L730.4 660.6 L736.6 668.2 L739.1 680.7 L740.4 690.7 L747.9 697 L755.4 689.5M747.9 697 L742.9 705.8 L735.4 713.3 L731.6 725.8 L720.3 727.1 L717.8 738.4 L722.8 750.9 L720.3 758.9M722.8 750.9 L730.4 750.9 L732.9 758.9M642.6 678.2 L650.1 685.7 L652.6 698.3 L647.6 713.3 L645.1 725.8 L643.9 740.9 L641.4 758.9M863.2 718.3 L865.7 733.3 L867 748.4 L868.2 758.9M882 685.7 L883.3 698.3 L888.3 704.5 L900.8 705.8 L909.6 700.8 L913.4 688.2 L918.4 693.2 L925.9 705.8 L935.9 712 L943.4 708.3 L948.5 703.3 L949.7 690.7 L953.5 675.7 L956 663.2 L966 655.6 L973.5 648.1 L976 640.6 L980 638.1M948.5 703.3 L956 708.3 L961 718.3 L963.5 733.3 L968.5 750.9 L980 755.9M973.5 560.4 L976 570.4 L980 585.4M975 560.2 L985.1 555.2 L997.6 554 L1005.1 545.2 L1017.7 535.2 L1027.7 527.6 L1040.2 520.1 L1055.3 521.4 L1062.8 526.4 L1067.8 532.6 L1080.3 538.9 L1092.9 532.6 L1105.4 533.9 L1112.9 537.7 L1110.4 547.7 L1105.4 560.2 L1100.4 572.8 L1092.9 587.8 L1089.1 600.3 L1085.3 610.4 L1076.6 617.9 L1079.1 627.9 L1085.3 635.4 L1090.4 639.2 L1096.6 632.9 L1105.4 630.4 L1115.4 631.7 L1125.5 635.4 L1135.5 641.7 L1140.5 632.9 L1146.8 625.4 L1158 624.9 L1168.1 627.9 L1175.6 632.9 L1184.4 637.9 L1188.1 645.5 L1195.6 653 L1203.2 663 L1208.2 673 L1210.7 680.6 L1206.9 686.8 L1200.7 688.1 L1190.6 684.3 L1180.6 681.8 L1170.6 683.1 L1158 684.3 L1150.5 688.1 L1144.3 693.1 L1139.2 688.1 L1134.2 691.8 L1133 698.1 L1120.4 699.4 L1110.4 701.9 L1105.4 693.1 L1100.4 688.1 L1090.4 686.8 L1077.8 688.1 L1060.3 690.6 L1055.3 685.6 L1047.7 675.5 L1046.5 665.5 L1040.2 659.2 L1027.7 650.5 L1015.2 645.5 L995.1 642.9 L991.3 632.9 L987.6 615.4 L982.6 600.3 L977.5 585.3 L976.3 572.8 L975 560.2M991.3 633.4 L982.6 635.4 L972.5 640.4 L973.8 653 L965 654.2 L960 660.5M1110.4 701.9 L1102.9 710.6 L1097.9 718.2 L1096.6 726.9 L1085.3 733.2 L1075.3 739.5 L1060.3 740.7 L1052.8 739.5 L1045.2 745.7 L1035.2 755.8 L1027.7 763.3 L1018.9 769.5 L1010.1 765.8 L1002.6 763.3 L987.6 758.3 L977.5 754.5 L970 754.5 L960 758.3M960 705.6 L962.5 718.2 L963.8 733.2 L968.8 743.2 L970 754.5M960 795.9 L967.5 803.4 L970 813.9M440 780.2 L447.5 785.2 L455 789 L466.3 789 L466.3 799 L471.3 801.5 L476.3 812.8 L481.4 827.9 L487.6 836.6 L493.9 844.1 L498.9 852.9 L507.7 852.9 L520.2 851.7 L530.2 852.9 L540.3 854.2 L550.3 856.7 L565.3 857.9 L580.4 859.2 L595.4 859.2 L605.5 857.9 L620.5 855.4 L635.5 857.9 L650.6 861.7 L663.1 865.5 L668.1 871.7 L680.7 876.7 L693.2 881.7 L705.7 886.8 L718.3 890.5 L730.8 891.8 L744.6 890.5 L745.8 898 L758.4 899.3 L768.4 893 L780.9 885.5 L796 876.7 L808.5 873 L820 870.5M540.3 854.2 L540.3 840.4 L539.8 830.4 L542.8 820.3 L544.8 807.8 L545.3 795.3 L544.8 781.5 L551.6 779 L554.1 770.2 L555.3 757.7 L560.3 742.6 L561.6 730.1 L557.8 717.5 L550.3 710 L542.8 703.8 L539 700M595.4 859.2 L591.7 845.4 L590.4 825.3 L589.9 800.3 L592.9 795.3 L600.4 794.8 L608 799 L613 805.3 L620.5 807.8 L638 806.5 L653.1 800.3 L660.6 796.5 L675.6 794 L690.7 792.8 L698.2 790.2 L702 780.2 L708.2 767.7 L715.8 757.7 L722 751.4 L719.5 742.6 L717 732.6 L720.8 726.3 L733.3 725.1 L734.6 717.5 L739.6 710 L747.1 706.3 L748.3 700M722 751.4 L730.8 752.6 L734.6 762.7 L740.8 767.7 L753.4 770.2 L765.9 771.4 L773.4 772.7 L778.4 780.2 L782.2 787.7 L789.7 792.8 L798.5 790.2 L808.5 784 L820 780.2M658.1 796.5 L658.1 787.7 L654.3 775.2 L654.3 765.2 L646.8 758.9 L641.8 750.1 L641.8 737.6 L645.6 725.1 L650.6 712.5 L653.1 700M800 875.6 L812.5 870.6 L827.6 866.8 L850.1 865.6 L867.7 866.8 L882.7 865.6 L895.3 864.3 L905.3 859.3 L915.3 855.5 L925.3 845.5 L935.4 833 L945.4 825.5 L957.9 817.9 L968 812.9 L970.5 807.9 L965.5 800.4 L960.4 792.9 L954.2 785.3 L955.4 775.3 L960.4 765.3 L964.2 756.5 L970.5 754.8 L980.5 756.5 L990.5 761.5 L1000.6 765.3 L1010.6 767.8 L1018.1 770.3 L1025.6 764 L1035.6 756.5 L1044.4 749 L1050.7 740.2 L1060.7 740.2 L1070.7 741.5 L1083.3 736.5 L1093.3 727.7 L1098.3 720.2 L1100.8 710.1 L1108.3 700.1 L1120.9 697.6 L1130.9 697.6 L1135.9 690.1 L1143.4 691.3 L1151 686.3 L1161 682.6 L1180 681.3M850.1 865.6 L851.4 850.5 L850.1 835.5 L848.9 820.4 L846.4 805.4 L842.6 790.4 L840.1 777.8 L841.4 767.8 L847.6 764 L860.2 762.8 L867.7 756.5 L867.7 735.2 L865.7 720.2 L860.2 717.7 L853.9 705.1 L853.9 692.6 L848.9 685.1 L845.1 681.3 L852.6 678.8 L862.7 677.5 L872.7 675 L880.2 678.8 L881.5 690.1 L877.7 700.1 L872.7 710.1 L867.7 718.9M840.1 777.8 L827.6 779.1 L815 781.6 L805 786.6 L800 790.4M800 688.8 L810 690.1 L820.1 696.3 L832.6 695.1 L842.6 690.1 L846.4 683.8M867.7 660 L872.7 667.5 L880.2 675 L880.2 678.8M881.5 690.1 L885.2 700.1 L892.8 706.4 L902.8 706.4 L907.8 700.1 L911.6 687.6 L917.8 695.1 L922.8 702.6 L930.4 710.1 L937.9 712.6 L945.4 708.9 L949.2 703.9 L950.4 690.1 L952.9 675 L955.4 660M949.2 703.9 L957.9 710.1 L962.9 722.7 L965.5 737.7 L970.5 747.7 L970.5 754.8M1040.7 660 L1046.9 667.5 L1044.4 675 L1050.7 682.6 L1059.5 690.1 L1065.7 690.1 L1078.3 686.3 L1090.8 685.1 L1100.8 686.3 L1104.6 692.6 L1108.3 700.1M400.5 758.9 L420 767 L433.5 775 L440 780.2 L447.5 785.2" fill="none" stroke="#f29620" stroke-width="1.1" stroke-linejoin="round"/>
<g clip-path="url(#sw)"><path d="M230 574.7 L235 575.4 L238.8 572.9 L247.5 561.6 L248.8 557.9 L267.6 556.6 L271.4 552.9 L280.1 550.3 L283.9 547.8 L292.7 542.8 L295.2 536.6 L304 533.3 L305.2 530.3 L315.2 524 L330.3 516.5 L340.3 511.5 L352.8 502.7 L360.4 499 L370.4 497.7 L375.4 491.4 L380.4 496.4 L386.7 497.7 L387.9 500.2 L395.5 496.4 L395.5 500.2 L400.5 505.2 L410.5 504 L433.1 505.2 L435.6 512.7 L438.1 524 L445.6 530.3 L455.6 531.5 L468.2 535.3 L478.2 532.8 L485.7 532.8 L493.2 536.6 L503.3 537.8 L515.8 539.1 L518.3 544.1 L530.8 540.3 L543.4 532.8 L550.9 527.8 L554.6 517.8 L555.9 507.7 L549.6 500.2 L545.9 492.7 L540.9 485.2 L543.4 475.1 L545.9 465.1 L553.4 457.6 L555.9 450.1 L565.9 442.5 L570.9 436.3 L573.4 430 L581 435 L591 440 L601 443.8 L606 448.8 L610 450.1M235 575.4 L237.5 585.4 L243.8 595.5 L242.5 601.7 L255.1 606.7 L262.6 615.5 L270.1 623 L275.1 626.8 L282.6 624.3 L290.2 625.6 L296.4 631.8 L302.7 633.1 L312.7 640.6 L317.7 650.6 L320.2 663.2 L327.8 673.2 L334 683.2 L335.3 690.7 L331.5 700.8 L334 713.3 L326.5 725.8 L324 735.9 L327.8 745.9 L335.3 750.9 L350.3 753.4 L370.4 754.7 L390.4 757.2 L400.5 758.9M304 533.3 L307.7 542.8 L312.7 550.3 L320.2 557.9 L325.3 565.4 L332.8 570.4 L337.8 577.9 L342.8 585.4 L344.1 593 L335.3 595.5 L324 596.7 L326.5 600.5 L327.8 615.5 L335.3 633.1 L340.3 645.6 L342.8 658.1 L347.8 663.2 L346.6 671.9 L352.8 678.2 L360.4 680.7 L361.6 687 L347.8 688.2 L342.8 689.5 L335.3 683.2M344.1 593 L350.3 585.4 L357.9 581.7 L362.9 585.4 L366.6 591.7 L370.4 596.7 L380.4 598 L387.9 600.5 L392.9 596.7 L400.5 598 L403 603 L408 606.7 L415.5 595.5 L428 589.2 L435.6 593 L445.6 595.5 L455.6 595 L460.6 593 L465.6 585.4 L470.7 577.9 L474.4 569.1 L474.4 561.6 L469.4 555.4 L466.9 545.3 L470.7 536.6 L478.2 532.8M408 606.7 L409.2 613 L405.5 623 L403 628.1 L405.5 635.6 L411.7 641.8 L415.5 650.6 L423 656.9 L428 658.1 L429.3 668.2 L433.1 675.7 L434.3 680.7 L423 685.7 L410.5 689.5 L414.3 697 L410.5 700.8 L409.2 713.3 L403 720.8 L398 725.8 L397.5 738.4 L400.5 750.9 L400.5 758.9M411.7 641.8 L420.5 639.3 L430.6 635.6 L433.1 638.1 L443.1 640.6 L455.6 643.1 L456.9 645.6 L465.6 644.4 L474.4 648.1 L480.7 651.9 L485.7 656.9 L490.7 658.1 L493.2 665.7 L497 673.2 L505.8 674.4 L513.3 680.7 L522.1 685.7 L529.6 683.2 L535.8 688.2 L537.1 698.3 L545.9 705.8 L553.4 713.3 L558.4 722.1 L560.9 733.3 L558.4 748.4 L557.1 758.9M515.8 539.1 L513.3 550.3 L512 560.4 L518.3 569.1 L528.3 570.4 L538.3 575.4 L553.4 577.9 L565.9 575.4 L578.5 574.2 L579.7 587.9 L581 600.5 L579.7 611.8 L565.9 615.5 L555.9 623 L550.9 630.6 L554.6 640.6 L563.4 638.1 L573.4 645.6 L586 643.1 L596 640.6 L601 648.1 L603.5 658.1 L606 668.2 L610 669.4M579.7 611.8 L591 610.5 L601 605.5 L610 604.2M554.6 640.6 L553.4 650.6 L548.4 658.1 L540.9 663.2 L537.1 673.2 L529.6 683.2M600 442.5 L607.5 450.1 L622.6 450.1 L632.6 456.3 L640.1 460.1 L650.1 462.6 L657.7 465.1 L667.7 466.4 L672.7 470.1 L672.7 482.7 L675.2 495.2 L676.5 505.2 L682.7 512.7 L692.8 517.8 L702.8 519 L712.8 525.3 L725.3 527.8 L736.6 524 L745.4 519 L755.4 515.2 L768 511.5 L780.5 514 L793 512.7 L808.1 517.8 L818.1 524 L823.1 530.3 L835.6 534 L844.4 539.1 L846.9 547.8 L853.2 554.1 L860.7 560.4 L865.7 564.1 L875.8 565.4 L885.8 564.1 L895.8 567.9 L905.8 570.4 L915.9 572.9 L925.9 571.7 L935.9 571.7 L951 567.9 L963.5 562.9 L973.5 560.4 L980 561.6M676.5 505.2 L675.2 517.8 L672.7 525.3 L671.4 535.3 L677.7 540.3 L690.2 545.3 L685.2 552.9 L675.2 557.9 L665.2 565.4 L657.7 572.9 L653.9 580.4 L642.6 576.7 L630.1 571.7 L625.1 575.4 L621.3 582.9 L617.5 590.5 L615 600.5 L610 605.5M653.9 580.4 L665.2 585.4 L672.7 587.9 L675.2 600.5 L682.7 613 L691.5 623 L699 635.6 L707.8 645.6 L710.3 651.9M745.4 519 L745.4 532.8 L749.2 542.8 L747.9 555.4 L744.1 572.9 L744.1 585.4 L745.4 595.5 L744.1 603 L739.1 610.5 L736.6 618 L742.9 625.6 L747.9 633.1 L747.9 640.6 L735.4 645.6 L725.3 650.6 L717.8 655.6 L710.3 658.1 L700.3 661.9 L692.8 656.9 L685.2 651.9 L682.7 660.6 L681.5 670.7 L675.2 673.2 L672.7 666.9 L662.7 673.2 L650.1 676.9 L642.6 678.2 L627.6 675.7 L620.1 670.7 L615 663.2 L607.5 663.2 L602.5 650.6 L600 648.1M744.1 572.9 L735.4 574.2 L727.9 576.7 L731.6 581.7 L737.9 585.4 L744.1 585.4M745.4 595.5 L750.4 599.2 L760.4 600.5 L770.5 598M775.5 585.4 L785.5 582.9 L790.5 587.9 L793 594.2 L800.6 598 L808.1 600.5 L815.6 598 L825.6 595.5 L835.6 598 L838.2 587.9 L840.7 582.9 L836.9 577.9 L843.2 575.4 L850.7 576.7 L860.7 572.9 L865.7 565.4M793 537.8 L790.5 545.3 L785.5 550.3 L785.5 565.4 L785.5 575.4 L795.5 572.9 L800.6 570.4 L808.1 572.9 L813.1 569.1 L813.1 560.4 L808.1 552.9 L800.6 555.4 L794.3 550.3 L793 537.8M800.6 615.5 L810.6 618 L820.6 615.5 L825.6 620.5 L833.1 625.6 L838.2 630.6 L835.6 638.1 L830.6 640.6 L820.6 638.1 L813.1 639.3 L803.1 635.6 L804.3 625.6 L800.6 615.5M831.9 650.6 L834.4 653.1 L831.9 656.1 L829.4 653.1 L831.9 650.6M865.7 565.4 L870.7 572.9 L875.8 580.4 L878.3 590.5 L880.8 605.5 L875.8 618 L870.7 625.6 L864.5 629.3 L862 638.1 L863.2 650.6 L868.2 660.6 L873.3 669.4 L878.3 675.7 L882 685.7 L880.8 695.7 L874.5 703.3 L870.7 713.3 L863.2 718.3 L858.2 710.8 L855.7 698.3 L857 688.2 L853.2 680.7 L845.7 680.7 L835.6 690.7 L825.6 695.7 L815.6 692 L805.6 689.5 L793 688.2 L780.5 683.2 L773 688.2 L765.5 693.2 L755.4 689.5M722.8 654.4 L730.4 660.6 L736.6 668.2 L739.1 680.7 L740.4 690.7 L747.9 697 L755.4 689.5M747.9 697 L742.9 705.8 L735.4 713.3 L731.6 725.8 L720.3 727.1 L717.8 738.4 L722.8 750.9 L720.3 758.9M722.8 750.9 L730.4 750.9 L732.9 758.9M642.6 678.2 L650.1 685.7 L652.6 698.3 L647.6 713.3 L645.1 725.8 L643.9 740.9 L641.4 758.9M863.2 718.3 L865.7 733.3 L867 748.4 L868.2 758.9M882 685.7 L883.3 698.3 L888.3 704.5 L900.8 705.8 L909.6 700.8 L913.4 688.2 L918.4 693.2 L925.9 705.8 L935.9 712 L943.4 708.3 L948.5 703.3 L949.7 690.7 L953.5 675.7 L956 663.2 L966 655.6 L973.5 648.1 L976 640.6 L980 638.1M948.5 703.3 L956 708.3 L961 718.3 L963.5 733.3 L968.5 750.9 L980 755.9M973.5 560.4 L976 570.4 L980 585.4M975 560.2 L985.1 555.2 L997.6 554 L1005.1 545.2 L1017.7 535.2 L1027.7 527.6 L1040.2 520.1 L1055.3 521.4 L1062.8 526.4 L1067.8 532.6 L1080.3 538.9 L1092.9 532.6 L1105.4 533.9 L1112.9 537.7 L1110.4 547.7 L1105.4 560.2 L1100.4 572.8 L1092.9 587.8 L1089.1 600.3 L1085.3 610.4 L1076.6 617.9 L1079.1 627.9 L1085.3 635.4 L1090.4 639.2 L1096.6 632.9 L1105.4 630.4 L1115.4 631.7 L1125.5 635.4 L1135.5 641.7 L1140.5 632.9 L1146.8 625.4 L1158 624.9 L1168.1 627.9 L1175.6 632.9 L1184.4 637.9 L1188.1 645.5 L1195.6 653 L1203.2 663 L1208.2 673 L1210.7 680.6 L1206.9 686.8 L1200.7 688.1 L1190.6 684.3 L1180.6 681.8 L1170.6 683.1 L1158 684.3 L1150.5 688.1 L1144.3 693.1 L1139.2 688.1 L1134.2 691.8 L1133 698.1 L1120.4 699.4 L1110.4 701.9 L1105.4 693.1 L1100.4 688.1 L1090.4 686.8 L1077.8 688.1 L1060.3 690.6 L1055.3 685.6 L1047.7 675.5 L1046.5 665.5 L1040.2 659.2 L1027.7 650.5 L1015.2 645.5 L995.1 642.9 L991.3 632.9 L987.6 615.4 L982.6 600.3 L977.5 585.3 L976.3 572.8 L975 560.2M991.3 633.4 L982.6 635.4 L972.5 640.4 L973.8 653 L965 654.2 L960 660.5M1110.4 701.9 L1102.9 710.6 L1097.9 718.2 L1096.6 726.9 L1085.3 733.2 L1075.3 739.5 L1060.3 740.7 L1052.8 739.5 L1045.2 745.7 L1035.2 755.8 L1027.7 763.3 L1018.9 769.5 L1010.1 765.8 L1002.6 763.3 L987.6 758.3 L977.5 754.5 L970 754.5 L960 758.3M960 705.6 L962.5 718.2 L963.8 733.2 L968.8 743.2 L970 754.5M960 795.9 L967.5 803.4 L970 813.9M440 780.2 L447.5 785.2 L455 789 L466.3 789 L466.3 799 L471.3 801.5 L476.3 812.8 L481.4 827.9 L487.6 836.6 L493.9 844.1 L498.9 852.9 L507.7 852.9 L520.2 851.7 L530.2 852.9 L540.3 854.2 L550.3 856.7 L565.3 857.9 L580.4 859.2 L595.4 859.2 L605.5 857.9 L620.5 855.4 L635.5 857.9 L650.6 861.7 L663.1 865.5 L668.1 871.7 L680.7 876.7 L693.2 881.7 L705.7 886.8 L718.3 890.5 L730.8 891.8 L744.6 890.5 L745.8 898 L758.4 899.3 L768.4 893 L780.9 885.5 L796 876.7 L808.5 873 L820 870.5M540.3 854.2 L540.3 840.4 L539.8 830.4 L542.8 820.3 L544.8 807.8 L545.3 795.3 L544.8 781.5 L551.6 779 L554.1 770.2 L555.3 757.7 L560.3 742.6 L561.6 730.1 L557.8 717.5 L550.3 710 L542.8 703.8 L539 700M595.4 859.2 L591.7 845.4 L590.4 825.3 L589.9 800.3 L592.9 795.3 L600.4 794.8 L608 799 L613 805.3 L620.5 807.8 L638 806.5 L653.1 800.3 L660.6 796.5 L675.6 794 L690.7 792.8 L698.2 790.2 L702 780.2 L708.2 767.7 L715.8 757.7 L722 751.4 L719.5 742.6 L717 732.6 L720.8 726.3 L733.3 725.1 L734.6 717.5 L739.6 710 L747.1 706.3 L748.3 700M722 751.4 L730.8 752.6 L734.6 762.7 L740.8 767.7 L753.4 770.2 L765.9 771.4 L773.4 772.7 L778.4 780.2 L782.2 787.7 L789.7 792.8 L798.5 790.2 L808.5 784 L820 780.2M658.1 796.5 L658.1 787.7 L654.3 775.2 L654.3 765.2 L646.8 758.9 L641.8 750.1 L641.8 737.6 L645.6 725.1 L650.6 712.5 L653.1 700M800 875.6 L812.5 870.6 L827.6 866.8 L850.1 865.6 L867.7 866.8 L882.7 865.6 L895.3 864.3 L905.3 859.3 L915.3 855.5 L925.3 845.5 L935.4 833 L945.4 825.5 L957.9 817.9 L968 812.9 L970.5 807.9 L965.5 800.4 L960.4 792.9 L954.2 785.3 L955.4 775.3 L960.4 765.3 L964.2 756.5 L970.5 754.8 L980.5 756.5 L990.5 761.5 L1000.6 765.3 L1010.6 767.8 L1018.1 770.3 L1025.6 764 L1035.6 756.5 L1044.4 749 L1050.7 740.2 L1060.7 740.2 L1070.7 741.5 L1083.3 736.5 L1093.3 727.7 L1098.3 720.2 L1100.8 710.1 L1108.3 700.1 L1120.9 697.6 L1130.9 697.6 L1135.9 690.1 L1143.4 691.3 L1151 686.3 L1161 682.6 L1180 681.3M850.1 865.6 L851.4 850.5 L850.1 835.5 L848.9 820.4 L846.4 805.4 L842.6 790.4 L840.1 777.8 L841.4 767.8 L847.6 764 L860.2 762.8 L867.7 756.5 L867.7 735.2 L865.7 720.2 L860.2 717.7 L853.9 705.1 L853.9 692.6 L848.9 685.1 L845.1 681.3 L852.6 678.8 L862.7 677.5 L872.7 675 L880.2 678.8 L881.5 690.1 L877.7 700.1 L872.7 710.1 L867.7 718.9M840.1 777.8 L827.6 779.1 L815 781.6 L805 786.6 L800 790.4M800 688.8 L810 690.1 L820.1 696.3 L832.6 695.1 L842.6 690.1 L846.4 683.8M867.7 660 L872.7 667.5 L880.2 675 L880.2 678.8M881.5 690.1 L885.2 700.1 L892.8 706.4 L902.8 706.4 L907.8 700.1 L911.6 687.6 L917.8 695.1 L922.8 702.6 L930.4 710.1 L937.9 712.6 L945.4 708.9 L949.2 703.9 L950.4 690.1 L952.9 675 L955.4 660M949.2 703.9 L957.9 710.1 L962.9 722.7 L965.5 737.7 L970.5 747.7 L970.5 754.8M1040.7 660 L1046.9 667.5 L1044.4 675 L1050.7 682.6 L1059.5 690.1 L1065.7 690.1 L1078.3 686.3 L1090.8 685.1 L1100.8 686.3 L1104.6 692.6 L1108.3 700.1M400.5 758.9 L420 767 L433.5 775 L440 780.2 L447.5 785.2" fill="none" stroke="#ffa424" stroke-width="1.6" stroke-linejoin="round"/></g>
<path d="M0.5 0V1334M152.5 0V1334M303.5 0V1334M455.5 0V1334M606.5 0V1334M758.5 0V1334M909.5 0V1334M1061.5 0V1334M1212.5 0V1334M1364.5 0V1334M1515.5 0V1334M0 0.5H1516M0 284.5H1516M0 533.5H1516M0 758.5H1516M0 963.5H1516M0 1155.5H1516" stroke="#6a6a6a" stroke-width="1" fill="none"/>
<rect x="516.1" y="13.1" width="484.5" height="27.4" fill="#fff"/><rect x="475.1" y="40.2" width="566.7" height="28.8" fill="#fff"/>
<text x="524.6" y="34.4" font-size="24" textLength="466.6" lengthAdjust="spacing" fill="#000" font-family="Liberation Sans, sans-serif">METOP-B 02/12/2025 12:31 Mongolia2.5km</text>
<text x="482.6" y="61.3" font-size="24" textLength="551.4" lengthAdjust="spacing" fill="#000" font-family="Liberation Sans, sans-serif">avhrr_ch1-avhrr_ch2-avhrr_ch4 Reflectance Factor</text>
</svg>
<div class="cb"><svg width="518" height="40" viewBox="500 1290 518 40"><defs><linearGradient id="cg" gradientUnits="userSpaceOnUse" x1="503" x2="1014.5" y1="0" y2="0">
<stop offset="0" stop-color="#77774a"/><stop offset="0.006" stop-color="#ffff00"/>
<stop offset="0.5" stop-color="#ffff06"/><stop offset="0.59" stop-color="#ffff22"/><stop offset="0.66" stop-color="#ffff44"/>
<stop offset="0.73" stop-color="#ffff70"/><stop offset="0.79" stop-color="#ffffa0"/><stop offset="0.86" stop-color="#ffffd8"/><stop offset="0.875" stop-color="#ffffff"/><stop offset="1" stop-color="#ffffff"/></linearGradient></defs><rect x="503" y="1294" width="511.5" height="16.5" fill="url(#cg)"/><rect x="502.9" y="1294" width="0.9" height="19" fill="#fff" opacity="0.9"/><rect x="604" y="1294" width="1" height="16.5" fill="#000"/><rect x="604.8" y="1294" width="0.9" height="19" fill="#fff" opacity="0.9"/><rect x="703.8" y="1294" width="1" height="16.5" fill="#000"/><rect x="704.6" y="1294" width="0.9" height="19" fill="#fff" opacity="0.9"/><rect x="768.5" y="1294" width="1" height="16.5" fill="#000"/><rect x="769.3" y="1294" width="0.9" height="19" fill="#fff" opacity="0.9"/><rect x="803.8" y="1294" width="1" height="16.5" fill="#000"/><rect x="838.9" y="1294" width="1" height="16.5" fill="#000"/><rect x="839.7" y="1294" width="0.9" height="19" fill="#fff" opacity="0.95"/><rect x="874" y="1294" width="1" height="16.5" fill="#000"/><rect x="906.7" y="1294" width="1" height="16.5" fill="#000"/><rect x="907.5" y="1294" width="0.9" height="19" fill="#fff" opacity="0.95"/><rect x="942" y="1294" width="1" height="16.5" fill="#000"/><rect x="976" y="1294" width="1" height="16.5" fill="#000"/><rect x="976.8" y="1294" width="0.9" height="19" fill="#fff" opacity="0.95"/><rect x="1009.2" y="1294" width="1" height="16.5" fill="#000"/><text x="499.8" y="1325" font-size="13" fill="#fff" font-family="Liberation Sans, sans-serif">0.00%</text><text x="605.3" y="1325" font-size="13" fill="#fff" text-anchor="middle" font-family="Liberation Sans, sans-serif">10.00</text><text x="705.1" y="1325" font-size="13" fill="#fff" text-anchor="middle" font-family="Liberation Sans, sans-serif">20.00</text><text x="769.8" y="1325" font-size="13" fill="#fff" text-anchor="middle" font-family="Liberation Sans, sans-serif">30.00</text><text x="840.2" y="1325" font-size="13" fill="#fff" text-anchor="middle" font-family="Liberation Sans, sans-serif">50.00</text><text x="908" y="1325" font-size="13" fill="#fff" text-anchor="middle" font-family="Liberation Sans, sans-serif">70.00</text><text x="977.3" y="1325" font-size="13" fill="#fff" text-anchor="middle" font-family="Liberation Sans, sans-serif">90.00</text></svg></div>
</body></html>
